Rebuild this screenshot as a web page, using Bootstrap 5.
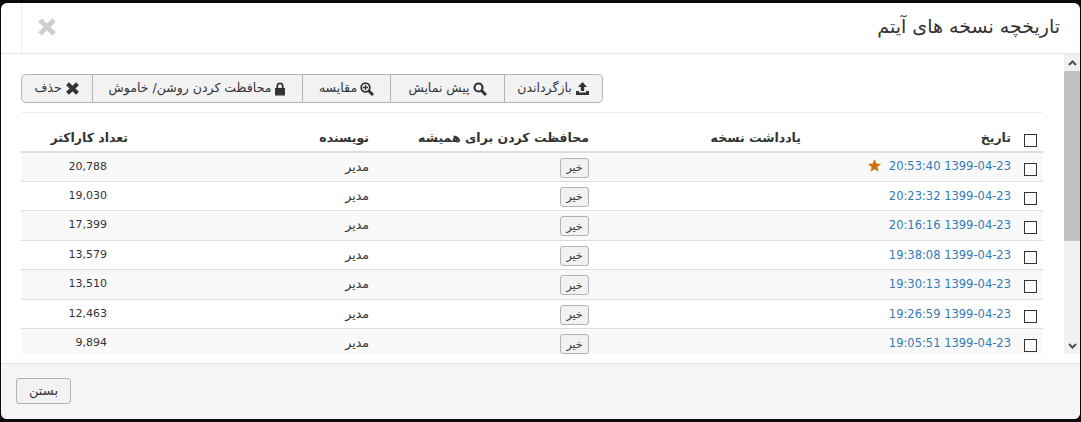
<!DOCTYPE html>
<html lang="fa" dir="rtl">
<head>
<meta charset="utf-8">
<title>تاریخچه نسخه های آیتم</title>
<link href="https://cdn.jsdelivr.net/npm/bootstrap@5.3.0/dist/css/bootstrap.min.css" rel="stylesheet">
<style>
html,body{height:422px;overflow:hidden;background:#0c0a0a;margin:0}
body{font-family:"DejaVu Sans",sans-serif;font-size:12.5px;color:#333;padding:3px 1px 0}
.dlg{width:1079px;height:416px;background:#fff;border-radius:6px;overflow:hidden;display:flex;flex-direction:column}
.dlg-head{height:51px;flex:none;display:flex;justify-content:space-between;align-items:center;border-bottom:1px solid #e5e5e5;padding-right:20px}
.dlg-title{font-size:19px;font-weight:400;margin:0;color:#333;line-height:1.1;padding-bottom:3px}
.dlg-x{width:51px;height:50px;border:0;border-right:0;border-left:1px solid #eee;background:none;padding:0 0 2px;display:flex;align-items:center;justify-content:center;margin-left:20px;flex:none}
.dlg-mid{height:310px;flex:none;display:flex;overflow:hidden;border-bottom:1px solid #e5e5e5}
.pane{width:1063px;height:300px;overflow:hidden;padding:20px 21px 0 20px;flex:none}
.fakebar{width:16px;height:300px;flex:none;background:#f1f1f1;display:flex;flex-direction:column}
.bar-end{height:17px;display:flex;align-items:center;justify-content:center;flex:none}
.bar-thumb{height:170px;background:#c1c1c1;flex:none}
.bar-fill{flex:1}
.tool-row{height:29px;margin-bottom:9px}
.tool-row .btn-group>.btn{font-size:12.5px;height:29px;padding:0;margin:0;background:#f2f2f2;border-color:#b3b3b3;color:#333;display:inline-flex;align-items:center;justify-content:center;gap:3px;flex:none}
.tool-row .btn-group>.btn:not(:first-child){margin-left:0}
.tool-row .btn-group>.btn:not(:last-child){border-left:0}
.tool-row .btn-group>.btn:first-child{border-radius:0 5px 5px 0;width:98px}
.tool-row .btn-group>.btn:nth-child(2){border-radius:0;width:114px}
.tool-row .btn-group>.btn:nth-child(3){border-radius:0;width:88px}
.tool-row .btn-group>.btn:nth-child(4){border-radius:0;width:210px}
.tool-row .btn-group>.btn:last-child{border-radius:5px 0 0 5px;width:72px}
.rule{border-top:1px solid #eee;height:0;margin:0}
.ver-table{width:1022px;table-layout:fixed;border-collapse:collapse;margin:9px 0 0}
.ver-table th,.ver-table td{padding:0 6px;text-align:right;vertical-align:top;color:#333;background:transparent;border:0;box-shadow:none}
.ver-table th{height:29.5px;font-weight:700;font-size:12.5px;border-bottom:2px solid #ddd;padding-top:7px}
.ver-table td{height:29.5px;border-bottom:1px solid #ddd;padding-top:5px}
.ver-table tbody tr:nth-child(odd) td{background:#f9f9f9}
.ver-table a{color:#337ab7;text-decoration:none;font-size:11.5px}
.tick{appearance:none;display:block;width:13px;height:13px;border:1px solid #333;background:#fff;margin:5px 0 0}
.ver-table th .tick{margin:5px 0 0}
.nope{font-size:11px;width:29px;height:20px;padding:0;background:#f2f2f2;border:1px solid #b3b3b3;color:#333;border-radius:3px;display:block;line-height:1}
.ver-table td.num{padding:6px 27px 0 6px;font-size:11px}
.star{margin-bottom:2px}
.dlg-foot{flex:1;background:#f5f5f5;padding:14px 15px;display:flex;justify-content:flex-end}
.shut{font-size:13px;height:26px;width:55px;padding:0;background:#f2f2f2;border:1px solid #b3b3b3;color:#333;border-radius:3px}
svg{display:block;flex:none}
</style>
</head>
<body>
<div class="dlg">
  <div class="dlg-head">
    <h4 class="dlg-title">تاریخچه نسخه های آیتم</h4>
    <button class="dlg-x" type="button" aria-label="بستن">
      <svg width="20" height="20" viewBox="0 0 20 20"><path d="M3 3 17 17M17 3 3 17" stroke="#cfcfcf" stroke-width="5"/></svg>
    </button>
  </div>
  <div class="dlg-mid">
    <div class="fakebar">
      <div class="bar-end"><svg width="9" height="6" viewBox="0 0 9 6"><path d="M1 5 4.5 1.500 8 5" fill="none" stroke="#505050" stroke-width="2"/></svg></div>
      <div class="bar-thumb"></div>
      <div class="bar-fill"></div>
      <div class="bar-end"><svg width="9" height="6" viewBox="0 0 9 6"><path d="M1 1 4.5 4.500 8 1" fill="none" stroke="#505050" stroke-width="2"/></svg></div>
    </div>
    <div class="pane">
      <div class="tool-row d-flex justify-content-end">
      <div class="btn-group" role="group">
        <button class="btn" type="button"><svg width="15" height="13" viewBox="0 0 15 13"><path fill="#333" d="M7.500 0 12 5H9.200v4H5.800V5H3zM1 9h3v1.500h7V9h3v4H1z"/></svg>بازگرداندن</button>
        <button class="btn" type="button"><svg width="14" height="14" viewBox="0 0 14 14"><circle cx="5.500" cy="5.500" r="4" fill="none" stroke="#333" stroke-width="2.200"/><path d="M8.500 8.500 13 13" stroke="#333" stroke-width="3"/></svg>پیش نمایش</button>
        <button class="btn" type="button"><svg width="14" height="14" viewBox="0 0 14 14"><circle cx="5.500" cy="5.500" r="4.300" fill="none" stroke="#333" stroke-width="1.800"/><path d="M8.500 8.500 13 13" stroke="#333" stroke-width="3"/><path d="M3 5.500h5M5.500 3v5" stroke="#333" stroke-width="1.300"/></svg>مقایسه</button>
        <button class="btn" type="button"><svg width="12" height="14" viewBox="0 0 12 14"><path fill="#333" d="M1 6h10v7.500H1z"/><path d="M3.300 6.500V4a2.700 2.700 0 0 1 5.400 0v2.500" fill="none" stroke="#333" stroke-width="1.800"/></svg>محافظت کردن روشن/ خاموش</button>
        <button class="btn" type="button"><svg width="15" height="13" viewBox="0 0 15 13"><path d="M2.500 1.800 12.500 11.200M12.500 1.800 2.500 11.200" stroke="#333" stroke-width="4"/></svg>حذف</button>
      </div>
      </div>
      <div class="rule"></div>
      <table class="ver-table">
        <colgroup><col style="width:26px"><col style="width:210px"><col style="width:212px"><col style="width:220px"><col style="width:241px"><col></colgroup>
        <thead><tr><th><input class="tick" type="checkbox" aria-label="همه"></th><th>تاریخ</th><th>یادداشت نسخه</th><th>محافظت کردن برای همیشه</th><th>نویسنده</th><th>تعداد کاراکتر</th></tr></thead>
        <tbody>
          <tr><td><input class="tick" type="checkbox"></td><td><div class="d-flex gap-2 align-items-center"><a href="#">1399-04-23 20:53:40</a><svg class="star" width="13" height="13" viewBox="0 0 13 13"><path fill="#c87408" d="M6.500 0 8.300 4.500 13 4.900 9.400 8 10.500 12.800 6.500 10.200 2.500 12.800 3.600 8 0 4.900 4.700 4.500z"/></svg></div></td><td></td><td><button class="nope" type="button">خیر</button></td><td>مدیر</td><td class="num">20,788</td></tr>
          <tr><td><input class="tick" type="checkbox"></td><td><a href="#">1399-04-23 20:23:32</a></td><td></td><td><button class="nope" type="button">خیر</button></td><td>مدیر</td><td class="num">19,030</td></tr>
          <tr><td><input class="tick" type="checkbox"></td><td><a href="#">1399-04-23 20:16:16</a></td><td></td><td><button class="nope" type="button">خیر</button></td><td>مدیر</td><td class="num">17,399</td></tr>
          <tr><td><input class="tick" type="checkbox"></td><td><a href="#">1399-04-23 19:38:08</a></td><td></td><td><button class="nope" type="button">خیر</button></td><td>مدیر</td><td class="num">13,579</td></tr>
          <tr><td><input class="tick" type="checkbox"></td><td><a href="#">1399-04-23 19:30:13</a></td><td></td><td><button class="nope" type="button">خیر</button></td><td>مدیر</td><td class="num">13,510</td></tr>
          <tr><td><input class="tick" type="checkbox"></td><td><a href="#">1399-04-23 19:26:59</a></td><td></td><td><button class="nope" type="button">خیر</button></td><td>مدیر</td><td class="num">12,463</td></tr>
          <tr><td><input class="tick" type="checkbox"></td><td><a href="#">1399-04-23 19:05:51</a></td><td></td><td><button class="nope" type="button">خیر</button></td><td>مدیر</td><td class="num">9,894</td></tr>
        </tbody>
      </table>
    </div>
  </div>
  <div class="dlg-foot"><button class="shut" type="button">بستن</button></div>
</div>
<script src="https://cdn.jsdelivr.net/npm/bootstrap@5.3.0/dist/js/bootstrap.bundle.min.js"></script>
</body>
</html>
